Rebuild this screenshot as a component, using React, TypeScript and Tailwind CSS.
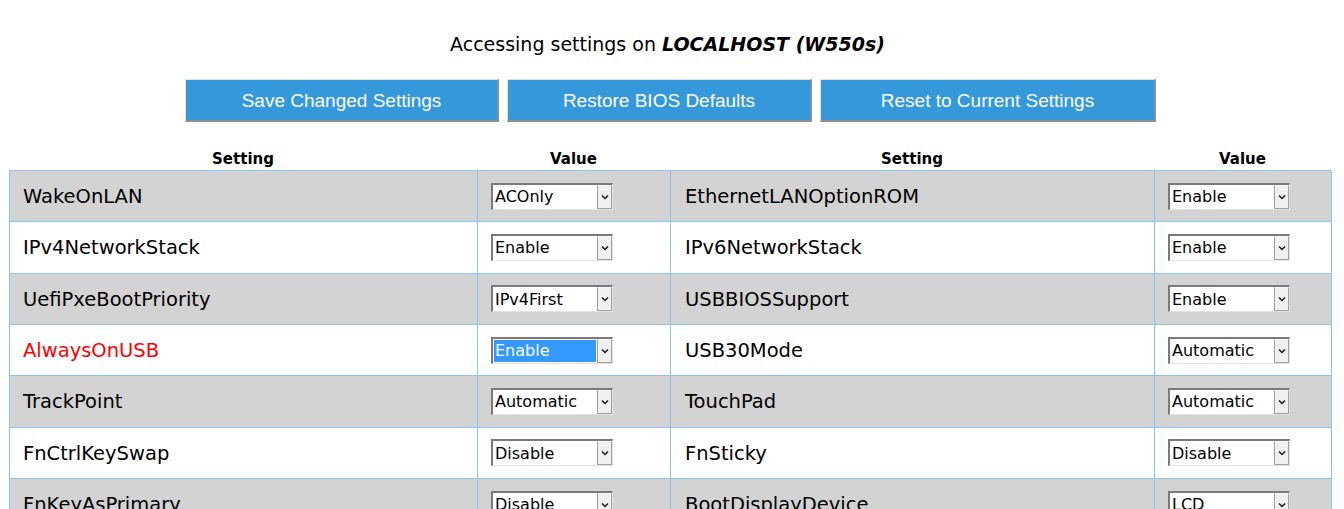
import React from "react";

type Row = { l: string; lv: string; r: string; rv: string; red?: boolean };

const rows: Row[] = [
  { l: "WakeOnLAN", lv: "ACOnly", r: "EthernetLANOptionROM", rv: "Enable" },
  { l: "IPv4NetworkStack", lv: "Enable", r: "IPv6NetworkStack", rv: "Enable" },
  { l: "UefiPxeBootPriority", lv: "IPv4First", r: "USBBIOSSupport", rv: "Enable" },
  { l: "AlwaysOnUSB", lv: "Enable", r: "USB30Mode", rv: "Automatic", red: true },
  { l: "TrackPoint", lv: "Automatic", r: "TouchPad", rv: "Automatic" },
  { l: "FnCtrlKeySwap", lv: "Disable", r: "FnSticky", rv: "Disable" },
  { l: "FnKeyAsPrimary", lv: "Disable", r: "BootDisplayDevice", rv: "LCD" },
];

function Select({ value, active }: { value: string; active?: boolean }) {
  return (
    <div className="flex h-[27px] w-[122px] border-t-2 border-l-2 border-t-[#7a7a7a] border-l-[#7a7a7a] border-b border-r border-b-[#e3e3e3] border-r-[#e3e3e3] bg-white">
      <div className="flex-1 p-[1px]">
        <div
          className={
            "h-full flex items-center pl-[1px] pt-[1px] text-[16px] leading-none " +
            (active ? "bg-[#3399ff] text-white" : "text-black")
          }
        >
          {value}
        </div>
      </div>
      <div className="w-[15px] flex items-center justify-center bg-[#f0f0f0] border-l border-[#a0a0a0] border-r border-r-[#a0a0a0] border-b border-b-[#a0a0a0] border-t border-t-[#f8f8f8]">
        <svg width="8" height="6" viewBox="0 0 8 6">
          <path d="M1 1.5 L4 4.5 L7 1.5" fill="none" stroke="#1a1a1a" strokeWidth="1.5" />
        </svg>
      </div>
    </div>
  );
}

export default function App() {
  const font = { fontFamily: '"DejaVu Sans", Verdana, sans-serif' };
  return (
    <div className="w-[1344px] h-[509px] overflow-hidden bg-white text-black" style={font}>
      <div className="h-[79px] flex items-start justify-center pt-[31px] pr-[9px]">
        <div className="text-[19px] leading-[26px]">
          Accessing settings on <b className="italic">LOCALHOST (W550s)</b>
        </div>
      </div>
      <div
        className="flex justify-center gap-[8px] pr-[3px]"
        style={{ fontFamily: '"Liberation Sans", Arial, sans-serif' }}
      >
        {[
          ["Save Changed Settings", "w-[314px]"],
          ["Restore BIOS Defaults", "w-[305px]"],
          ["Reset to Current Settings", "w-[336px]"],
        ].map(([t, w]) => (
          <button
            key={t}
            className={
              w +
              " h-[43px] pt-[2px] bg-[#3498db] text-white text-[19px] border-t border-l border-t-[#e2e2e2] border-l-[#e2e2e2] border-b-2 border-r-2 border-b-[#8f8f8f] border-r-[#8f8f8f]"
            }
          >
            {t}
          </button>
        ))}
      </div>
      <div className="ml-[9px] w-[1322px] mt-[25px]">
        <div className="grid grid-cols-[468px_193px_484px_177px] h-[23px] pt-[1px] font-bold text-[15px] leading-[23px] text-center">
          <div>Setting</div>
          <div>Value</div>
          <div>Setting</div>
          <div>Value</div>
        </div>
        <div className="border-t border-l border-[#8cc4ee]">
          {rows.map((r, i) => (
            <div
              key={r.l}
              className={
                "grid grid-cols-[468px_193px_484px_177px] h-[51.33px] " +
                (i % 2 === 0 ? "bg-[#d3d3d3]" : "bg-white")
              }
            >
              <div
                className={
                  "border-r border-b border-[#8cc4ee] flex items-center pl-[13px] pt-[1px] text-[19.5px] " +
                  (r.red ? "text-[#ff0000]" : "")
                }
              >
                {r.l}
              </div>
              <div className="border-r border-b border-[#8cc4ee] flex items-center pl-[13px]">
                <Select value={r.lv} active={r.red} />
              </div>
              <div className="border-r border-b border-[#8cc4ee] flex items-center pl-[14px] pt-[1px] text-[19.5px]">
                {r.r}
              </div>
              <div className="border-r border-b border-[#8cc4ee] flex items-center pl-[13px]">
                <Select value={r.rv} />
              </div>
            </div>
          ))}
        </div>
      </div>
    </div>
  );
}
